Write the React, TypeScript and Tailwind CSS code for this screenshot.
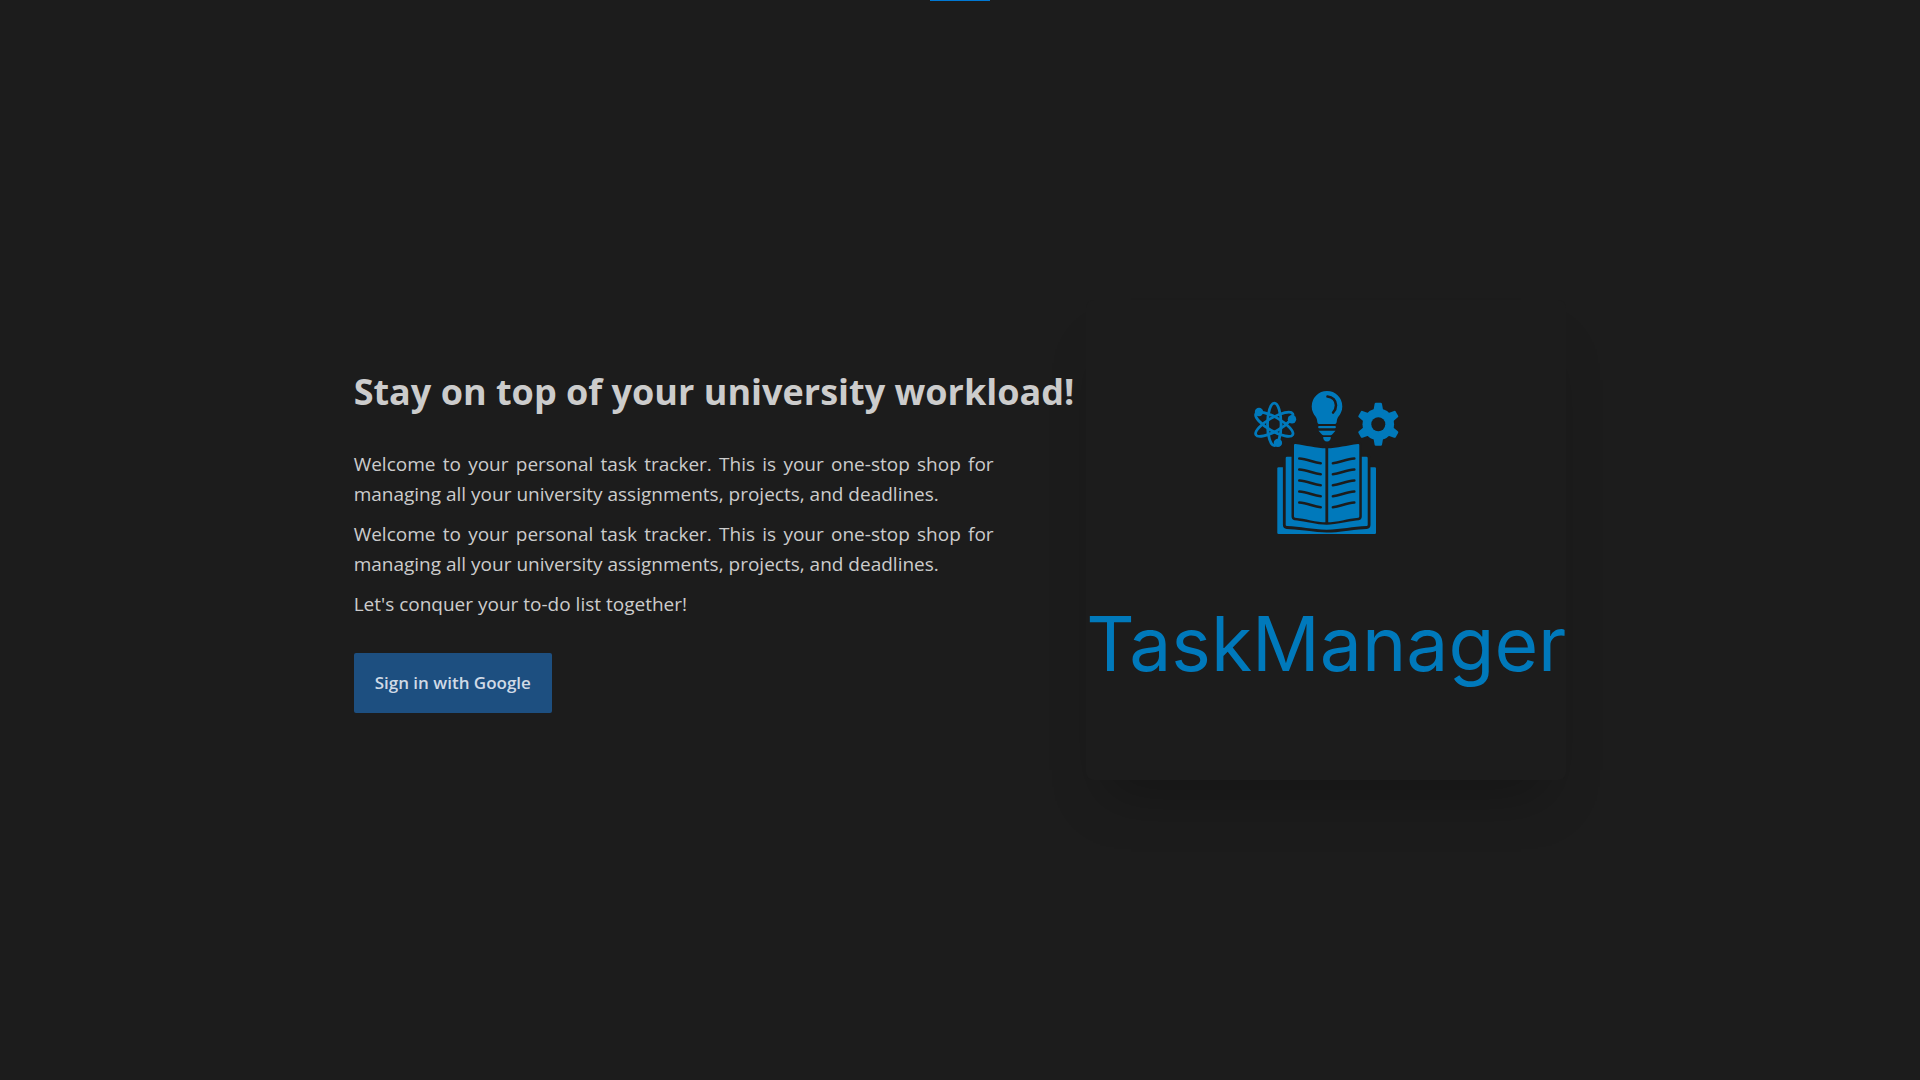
const BRAND = "#0079bb";
const GROUND = "#1c1c1c";

function Atom() {
  return (
    <g transform="translate(24.3 36.3)">
      {[0, 60, 120].map((angle) => (
        <ellipse
          key={angle}
          rx="6.8"
          ry="21.2"
          fill="none"
          stroke={BRAND}
          strokeWidth="2.8"
          transform={`rotate(${angle})`}
        />
      ))}
      <circle cx="-15.3" cy="-12.3" r="4.2" fill={BRAND} />
      <circle cx="17.7" cy="-5" r="4.2" fill={BRAND} />
      <circle cx="3.6" cy="18.6" r="4.2" fill={BRAND} />
    </g>
  );
}

function Bulb() {
  return (
    <g fill={BRAND}>
      <path d="M77 3.1a15.3 15.3 0 0 1 15.3 15.3c0 4.6-2 7.6-3.8 10.2-1.2 1.8-1.6 3-1.7 4.6-.1 1.9-1 2.9-2.6 2.9h-14.4c-1.6 0-2.5-1-2.6-2.9-.1-1.6-.5-2.8-1.7-4.6-1.8-2.6-3.8-5.6-3.8-10.2A15.3 15.3 0 0 1 77 3.1Z" />
      <path
        d="M77.5 8.5c5 .3 8.5 4 8.5 8.7 0 3-1.1 5.3-2.9 7.3"
        fill="none"
        stroke={GROUND}
        strokeWidth="2.6"
        strokeLinecap="round"
      />
      <rect x="68.2" y="38" width="17.6" height="2.3" rx="0.8" />
      <path d="M68.5 42.8h17l-3.6 4a2 2 0 0 1-1.2.4h-7.4a2 2 0 0 1-1.2-.4Z" />
      <path d="M73.2 49h7.6c0 3-1.4 4.4-3.8 4.4s-3.8-1.4-3.8-4.4Z" />
    </g>
  );
}

function Gear() {
  return (
    <g transform="translate(128.3 36.3)" fill={BRAND}>
      <circle r="15.8" />
      {[0, 60, 120, 180, 240, 300].map((angle) => (
        <path
          key={angle}
          d="M-5-13-3.7-20.4a1.3 1.3 0 0 1 1.3-1.1h4.8a1.3 1.3 0 0 1 1.3 1.1L5-13Z"
          transform={`rotate(${angle})`}
        />
      ))}
      <circle r="7" fill={GROUND} />
    </g>
  );
}

function Book() {
  return (
    <g strokeLinejoin="round">
      <rect x="27.3" y="79.3" width="98.7" height="66.7" rx="1.2" fill={BRAND} />
      <path
        d="M37 68.7H116.4a1.3 1.3 0 0 1 1.3 1.3V137q0 1-1.2 1.1C103 138.3 91 141.7 76.7 141.7S50 138.3 37 138.1q-1.3-.1-1.3-1.1V70a1.3 1.3 0 0 1 1.3-1.3Z"
        fill={BRAND}
        stroke={GROUND}
        strokeWidth="5.6"
        paintOrder="stroke"
      />
      <path
        d="M44 57q0-1.2 1.3-1.1C56 57 66 60.3 76.7 60.3S97 57 108 55.9q1.3-.1 1.3 1.1V128.5q0 1-1 1.2C98 130.6 87 134.3 76.7 134.3S55 130.6 45 129.7q-1-.2-1-1.2Z"
        fill={BRAND}
        stroke={GROUND}
        strokeWidth="5"
        paintOrder="stroke"
      />
      <path d="M76.8 58V135" stroke={GROUND} strokeWidth="2.8" />
      {[0, 11, 22, 33, 44].map((dy) => (
        <g
          key={dy}
          transform={`translate(0 ${dy})`}
          fill="none"
          stroke={GROUND}
          strokeWidth="2.6"
          strokeLinecap="round"
        >
          <path d="M49.3 70.5c8 .3 14 4 21.4 4.7" />
          <path d="M104.3 70.5c-8 .3-14 4-21.4 4.7" />
        </g>
      ))}
    </g>
  );
}

function Logo() {
  return (
    <figure className="flex aspect-square w-[480px] shrink-0 flex-col items-center rounded-lg bg-[#1c1c1c] pt-22 shadow-[0_35px_50px_-20px_rgba(0,0,0,0.25)]">
      <svg
        viewBox="0 0 152 150"
        className="h-[150px] w-[152px]"
        role="img"
        aria-label="Open book with an atom, a light bulb and a gear"
      >
        <Atom />
        <Bulb />
        <Gear />
        <Book />
      </svg>
      <figcaption className="mt-[58px] whitespace-nowrap font-['Inter',sans-serif] text-[75px] leading-[96px] text-[#0079bb]">
        TaskManager
      </figcaption>
    </figure>
  );
}

export default function App() {
  return (
    <div className="flex min-h-screen flex-col bg-[#1c1c1c] font-['Open_Sans','Noto_Sans',sans-serif] text-[#cccccc]">
      <div className="h-px w-15 self-center bg-[#0078d4]" />
      <main className="flex flex-1 items-center justify-center gap-3 pb-px">
        <section className="flex flex-col items-start">
          <h1 className="whitespace-nowrap text-[36px] font-bold leading-[50px]">
            Stay on top of your university workload!
          </h1>
          <div className="mt-8 flex w-[640px] flex-col gap-[10px] text-justify text-[19px] leading-[30px]">
            <p>
              Welcome to your personal task tracker. This is your one-stop shop
              for managing all your university assignments, projects, and
              deadlines.
            </p>
            <p>
              Welcome to your personal task tracker. This is your one-stop shop
              for managing all your university assignments, projects, and
              deadlines.
            </p>
            <p>Let's conquer your to-do list together!</p>
          </div>
          <button
            type="button"
            className="mt-[34px] h-[60px] rounded-xs bg-[#1d4f80] px-[21px] text-[17px] font-semibold text-[#d0dae6]"
          >
            Sign in with Google
          </button>
        </section>
        <Logo />
      </main>
    </div>
  );
}
